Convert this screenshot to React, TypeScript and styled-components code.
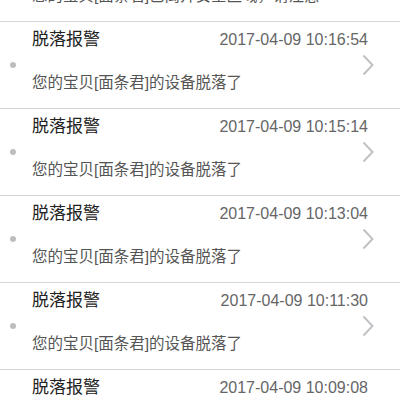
import styled, { createGlobalStyle } from 'styled-components'

const GlobalStyle = createGlobalStyle`
  html, body {
    margin: 0;
    padding: 0;
    background: #fff;
  }
  body {
    font-family: "Liberation Sans", "Noto Sans CJK SC", sans-serif;
  }
`

type Alarm = {
  title: string
  time: string
  content: string
}

const alarms: Alarm[] = [
  { title: '越界报警', time: '2017-04-09 10:18:20', content: '您的宝贝[面条君]已离开安全区域，请注意' },
  { title: '脱落报警', time: '2017-04-09 10:16:54', content: '您的宝贝[面条君]的设备脱落了' },
  { title: '脱落报警', time: '2017-04-09 10:15:14', content: '您的宝贝[面条君]的设备脱落了' },
  { title: '脱落报警', time: '2017-04-09 10:13:04', content: '您的宝贝[面条君]的设备脱落了' },
  { title: '脱落报警', time: '2017-04-09 10:11:30', content: '您的宝贝[面条君]的设备脱落了' },
  { title: '脱落报警', time: '2017-04-09 10:09:08', content: '您的宝贝[面条君]的设备脱落了' },
]

const App = () => {
  return (
    <Screen>
      <GlobalStyle />
      <List>
        {alarms.map((item, i) => (
          <Item key={i}>
            <Dot />
            <Title>{item.title}</Title>
            <Time>{item.time}</Time>
            <Content>{item.content}</Content>
            <Arrow width="12" height="22" viewBox="0 0 12 22">
              <polyline points="1.5,1.5 10.5,11 1.5,20.5" fill="none" stroke="#c2c2c6" strokeWidth="2" />
            </Arrow>
          </Item>
        ))}
      </List>
    </Screen>
  )
}

const Screen = styled.div`
  width: 400px;
  height: 400px;
  overflow: hidden;
  background: #fff;
`

const List = styled.div`
  display: flex;
  flex-direction: column;
  margin-top: -65px; /* 스크롤된 상태 */
`

const Item = styled.div`
  display: grid;
  grid-template-columns: 32px 1fr 12px;
  grid-template-rows: 30px 41px 15px;
  padding-right: 26px;
  border-bottom: 1px solid #d6d6d6;
`

const Dot = styled.span`
  grid-column: 1;
  grid-row: 1 / 4;
  align-self: center;
  margin-left: 10px;
  width: 6px;
  height: 6px;
  border-radius: 50%;
  background: #bdbdbd;
`

const Title = styled.div`
  grid-column: 2;
  grid-row: 1;
  align-self: end;
  font-size: 17px;
  line-height: 24px;
  color: #222;
`

const Time = styled.div`
  grid-column: 2 / 4;
  grid-row: 1;
  align-self: end;
  justify-self: end;
  margin-right: 6px;
  font-size: 16px;
  line-height: 24px;
  color: #666;
`

const Content = styled.div`
  grid-column: 2;
  grid-row: 2;
  align-self: end;
  font-size: 15.5px;
  line-height: 20px;
  color: #555;
`

const Arrow = styled.svg`
  grid-column: 3;
  grid-row: 1 / 4;
  align-self: center;
`

export default App
